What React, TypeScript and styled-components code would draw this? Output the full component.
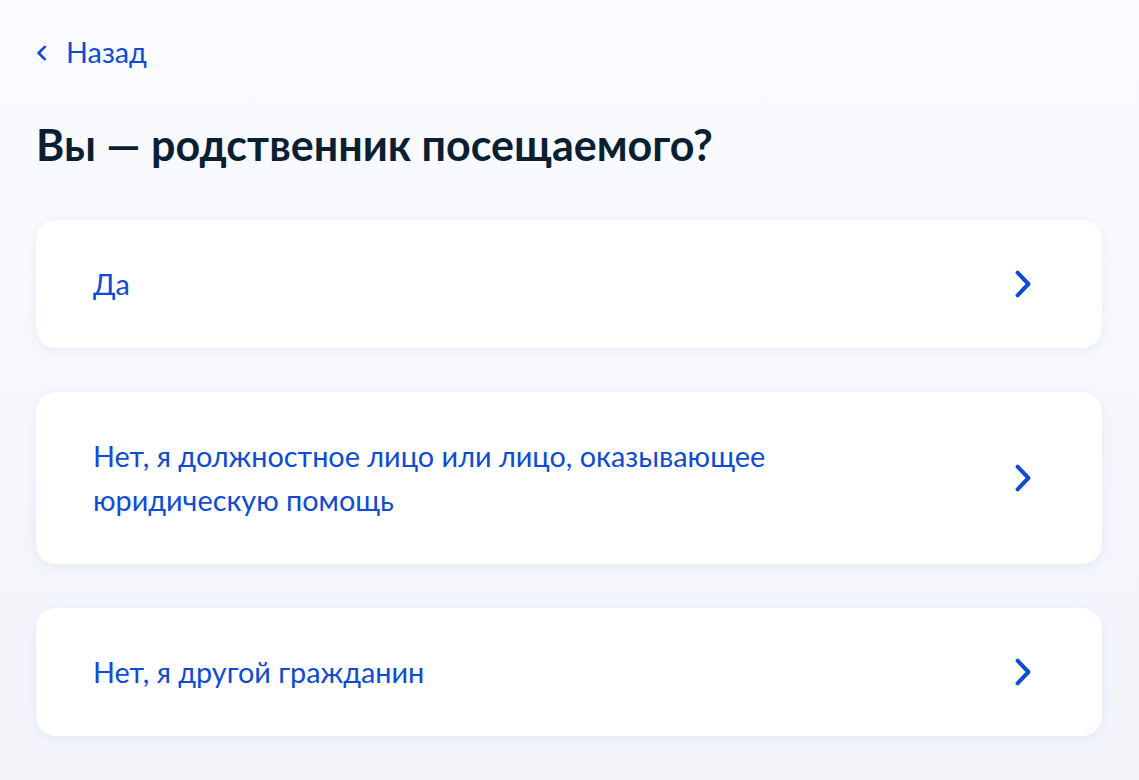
import React from "react";
import styled, { createGlobalStyle } from "styled-components";

const GlobalStyle = createGlobalStyle`
  html, body {
    margin: 0;
    padding: 0;
  }
  body {
    font-family: Lato, "Noto Sans", "Liberation Sans", sans-serif;
    background: linear-gradient(180deg, #fafbfe 0%, #f2f4fa 100%);
    min-height: 780px;
  }
`;

const Page = styled.div`
  display: flex;
  flex-direction: column;
  padding: 31px 37px 40px 36px;
`;

const BackLink = styled.a`
  display: flex;
  align-items: center;
  gap: 19px;
  align-self: flex-start;
  color: #0d4cd3;
  font-size: 28.8px;
  line-height: 43px;
  text-decoration: none;
  cursor: pointer;
`;

const Title = styled.h1`
  margin: 42px 0 46px 0;
  color: #0b1f33;
  font-size: 43px;
  font-weight: 700;
  line-height: 58px;
`;

const List = styled.div`
  display: flex;
  flex-direction: column;
  gap: 44px;
`;

const Card = styled.button`
  display: flex;
  align-items: center;
  justify-content: space-between;
  width: 100%;
  padding: 42px 71px 42px 57px;
  border: none;
  border-radius: 20px;
  background: #ffffff;
  box-shadow: 0 2px 10px rgba(40, 80, 170, 0.08);
  font-family: inherit;
  text-align: left;
  cursor: pointer;
`;

const CardText = styled.span`
  max-width: 800px;
  color: #0d4cd3;
  font-size: 28.8px;
  line-height: 44px;
`;

const Chevron = styled.svg`
  flex: none;
  width: 16px;
  height: 28px;
`;

const options = [
  "Да",
  "Нет, я должностное лицо или лицо, оказывающее юридическую помощь",
  "Нет, я другой гражданин",
];

const App = () => {
  return (
    <>
      <GlobalStyle />
      <Page>
        <BackLink>
          <svg width="11" height="16" viewBox="0 0 11 16">
            <path
              d="M8.8 1.8 L2.6 8 L8.8 14.2"
              fill="none"
              stroke="#0d4cd3"
              strokeWidth="2.6"
              strokeLinecap="round"
              strokeLinejoin="round"
            />
          </svg>
          Назад
        </BackLink>
        <Title>Вы — родственник посещаемого?</Title>
        <List>
          {options.map((text) => (
            <Card key={text}>
              <CardText>{text}</CardText>
              <Chevron viewBox="0 0 16 28">
                <path
                  d="M2.6 2.6 L13.4 14 L2.6 25.4"
                  fill="none"
                  stroke="#0d4cd3"
                  strokeWidth="4"
                  strokeLinecap="round"
                  strokeLinejoin="round"
                />
              </Chevron>
            </Card>
          ))}
        </List>
      </Page>
    </>
  );
};

export default App;
